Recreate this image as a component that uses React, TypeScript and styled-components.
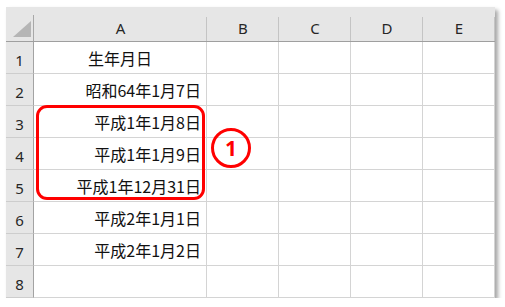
import React from "react";
import styled, { createGlobalStyle } from "styled-components";

const Global = createGlobalStyle`
  html, body { margin: 0; padding: 0; background: #ffffff; }
  body { font-family: "Noto Sans CJK JP", "Noto Sans", sans-serif; }
`;

const Page = styled.div`
  padding: 7px 0 0 6px;
`;

const Sheet = styled.div`
  position: relative;
  display: grid;
  grid-template-columns: 28px 173px 72px 72px 72px 72px;
  grid-template-rows: 35px repeat(8, 32px);
  width: 489px;
  box-shadow: 3px 3px 4px rgba(0, 0, 0, 0.35);
  background: #ffffff;
`;

const Corner = styled.div`
  position: relative;
  box-sizing: border-box;
  background: #e6e6e6;
  border-bottom: 1px solid #9f9f9f;
  &::after {
    content: "";
    position: absolute;
    right: 0;
    top: 8px;
    bottom: 0;
    width: 1px;
    background: #a8a8a8;
  }
`;

const Triangle = styled.div`
  position: absolute;
  left: 7px;
  top: 14px;
  width: 18px;
  height: 16px;
  background: #b5b5b5;
  clip-path: polygon(100% 0, 100% 100%, 0 100%);
`;

const ColHead = styled.div`
  position: relative;
  box-sizing: border-box;
  background: #e6e6e6;
  border-bottom: 1px solid #9f9f9f;
  display: flex;
  align-items: center;
  justify-content: center;
  padding-top: 8px;
  font-family: "Noto Sans", sans-serif;
  font-size: 15px;
  color: #262626;
  &::after {
    content: "";
    position: absolute;
    right: 0;
    top: 10px;
    bottom: 0;
    width: 1px;
    background: #c4c4c4;
  }
`;

const RowHead = styled.div`
  box-sizing: border-box;
  background: #e6e6e6;
  border-right: 1px solid #a3a3a3;
  border-bottom: 1px solid #cdcdcd;
  display: flex;
  align-items: center;
  justify-content: center;
  padding-top: 5px;
  font-family: "Noto Sans", sans-serif;
  font-size: 15px;
  color: #262626;
`;

const Cell = styled.div<{ $align?: "left" | "center" | "right" }>`
  box-sizing: border-box;
  border-right: 1px solid #d4d4d4;
  border-bottom: 1px solid #d4d4d4;
  display: flex;
  align-items: center;
  justify-content: ${(p) =>
    p.$align === "center" ? "center" : p.$align === "right" ? "flex-end" : "flex-start"};
  padding: 1px 5px 0 5px;
  font-size: 16px;
  line-height: 1;
  color: #111111;
  white-space: nowrap;
`;

const Highlight = styled.div`
  position: absolute;
  left: 30px;
  top: 98px;
  width: 169px;
  height: 95px;
  box-sizing: border-box;
  border: 3px solid #ff0000;
  border-radius: 11px;
  pointer-events: none;
`;

const Badge = styled.div`
  position: absolute;
  left: 205px;
  top: 121px;
  width: 40px;
  height: 40px;
  box-sizing: border-box;
  border: 3px solid #ff0000;
  border-radius: 50%;
  display: flex;
  align-items: center;
  justify-content: center;
  font-family: "Noto Sans", sans-serif;
  font-weight: 700;
  font-size: 21px;
  line-height: 1;
  color: #ff0000;
`;

const columns = ["A", "B", "C", "D", "E"];

const rows: { value: string; align: "center" | "right" }[] = [
  { value: "生年月日", align: "center" },
  { value: "昭和64年1月7日", align: "right" },
  { value: "平成1年1月8日", align: "right" },
  { value: "平成1年1月9日", align: "right" },
  { value: "平成1年12月31日", align: "right" },
  { value: "平成2年1月1日", align: "right" },
  { value: "平成2年1月2日", align: "right" },
  { value: "", align: "right" },
];

export default function App() {
  return (
    <>
      <Global />
      <Page>
        <Sheet>
          <Corner>
            <Triangle />
          </Corner>
          {columns.map((c) => (
            <ColHead key={c}>{c}</ColHead>
          ))}
          {rows.map((r, i) => (
            <React.Fragment key={i}>
              <RowHead>{i + 1}</RowHead>
              <Cell $align={r.align}>{r.value}</Cell>
              {columns.slice(1).map((c) => (
                <Cell key={c} />
              ))}
            </React.Fragment>
          ))}
          <Highlight />
          <Badge>1</Badge>
        </Sheet>
      </Page>
    </>
  );
}
